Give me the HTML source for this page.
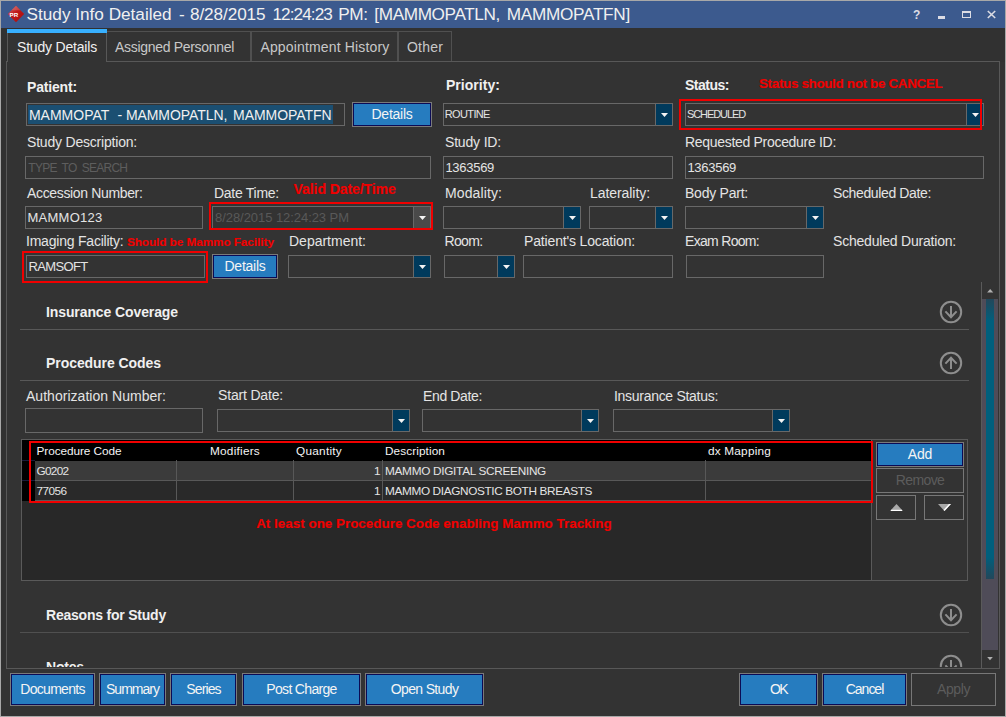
<!DOCTYPE html><html><head><meta charset="utf-8"><title>Study Info Detailed</title><style>
html,body{margin:0;padding:0;}body{width:1006px;height:717px;overflow:hidden;background:#333333;position:relative;font-family:"Liberation Sans", sans-serif;}
.a{position:absolute;box-sizing:border-box;}
.t{position:absolute;white-space:nowrap;line-height:20px;height:20px;}
svg{position:absolute;overflow:visible;}
</style></head><body>
<div class="a" style="left:0px;top:0px;width:1006px;height:717px;background:#a8a8a8;"></div>
<div class="a" style="left:1px;top:1px;width:1004px;height:715px;background:#333333;"></div>
<div class="a" style="left:1px;top:1px;width:1004px;height:27px;background:#3c5a8e;"></div>
<div class="a" style="left:1px;top:28px;width:1004px;height:34px;background:#313131;"></div>
<div class="a" style="left:1px;top:62px;width:6px;height:607px;background:#313131;"></div>
<svg style="left:7px;top:5px" width="18" height="18" viewBox="0 0 18 18"><defs><linearGradient id="g1" x1="0" y1="0" x2="1" y2="1"><stop offset="0" stop-color="#d46a6a"/><stop offset="0.45" stop-color="#c01818"/><stop offset="1" stop-color="#a80c0c"/></linearGradient></defs><polygon points="9,0.8 17.2,9 9,17.2 0.8,9" fill="url(#g1)"/><polygon points="9,0.8 13.5,5.3 4.5,5.3" fill="#e09090" opacity="0.35"/><text x="2.6" y="11.6" font-family="Liberation Sans, sans-serif" font-weight="bold" font-size="6.2" fill="#ffffff">PR</text></svg>
<div class="a" style="left:938px;top:15.5px;width:7px;height:3px;background:#dcdce4;"></div>
<div class="a" style="left:962px;top:11px;width:9.4px;height:7.2px;border:1px solid #dcdce4;border-top-width:2px;"></div>
<svg style="left:987px;top:11px" width="9" height="7" viewBox="0 0 9 7"><path d="M0.8 0 L8.2 7 M8.2 0 L0.8 7" stroke="#dcdce4" stroke-width="1.6" fill="none"/></svg>
<div class="a" style="left:6px;top:61px;width:994px;height:608px;background:#333333;border:1px solid #585858;"></div>
<div class="a" style="left:107px;top:31px;width:144px;height:30px;background:#333333;border:1px solid #505050;border-bottom:none;border-left:none;"></div>
<div class="a" style="left:251px;top:31px;width:147px;height:30px;background:#333333;border:1px solid #505050;border-bottom:none;"></div>
<div class="a" style="left:398px;top:31px;width:54px;height:30px;background:#333333;border:1px solid #505050;border-bottom:none;"></div>
<div class="a" style="left:7px;top:29px;width:100px;height:33px;background:#333333;border:1px solid #585858;border-bottom:none;border-top:none;"></div>
<div class="a" style="left:7px;top:29px;width:100px;height:4px;background:#38b0ff;"></div>
<div class="a" style="left:26px;top:103px;width:319px;height:23px;border:1px solid #686868;"></div>
<div class="a" style="left:28px;top:105px;width:305px;height:19px;background:#1b4f72;"></div>
<div class="a" style="left:352px;top:102px;width:80px;height:25px;background:#267cbf;border:1px solid #7a7a7a;"></div>
<div class="a" style="left:353px;top:103px;width:78px;height:23px;background:#267cbf;border:1px solid #0b0b55;"></div>
<div class="a" style="left:443px;top:103px;width:230px;height:23px;border:1px solid #686868;"></div>
<div class="a" style="left:655px;top:104px;width:17px;height:21px;background:#003a5c;border-left:1px solid #686868;"></div>
<svg style="left:660.5px;top:113px" width="7" height="4" viewBox="0 0 7 4"><polygon points="0,0 7,0 3.5,4" fill="#f4f4f4"/></svg>
<div class="a" style="left:685px;top:103px;width:299px;height:23px;border:1px solid #686868;"></div>
<div class="a" style="left:966px;top:104px;width:17px;height:21px;background:#003a5c;border-left:1px solid #686868;"></div>
<svg style="left:971.5px;top:113px" width="7" height="4" viewBox="0 0 7 4"><polygon points="0,0 7,0 3.5,4" fill="#f4f4f4"/></svg>
<div class="a" style="left:679px;top:99px;width:303px;height:31px;border:2px solid #f00000;"></div>
<div class="a" style="left:25px;top:156px;width:406px;height:23px;border:1px solid #686868;"></div>
<div class="a" style="left:443px;top:156px;width:230px;height:23px;border:1px solid #686868;"></div>
<div class="a" style="left:685px;top:156px;width:299px;height:23px;border:1px solid #686868;"></div>
<div class="a" style="left:25px;top:206px;width:178px;height:23px;border:1px solid #686868;"></div>
<div class="a" style="left:212px;top:206px;width:219px;height:23px;border:1px solid #686868;"></div>
<div class="a" style="left:413px;top:207px;width:17px;height:21px;background:#4a4a4a;border-left:1px solid #686868;"></div>
<svg style="left:418.5px;top:216px" width="7" height="4" viewBox="0 0 7 4"><polygon points="0,0 7,0 3.5,4" fill="#f4f4f4"/></svg>
<div class="a" style="left:209px;top:202px;width:224px;height:28px;border:2px solid #f00000;"></div>
<div class="a" style="left:443px;top:206px;width:138px;height:23px;border:1px solid #686868;"></div>
<div class="a" style="left:563px;top:207px;width:17px;height:21px;background:#003a5c;border-left:1px solid #686868;"></div>
<svg style="left:568.5px;top:216px" width="7" height="4" viewBox="0 0 7 4"><polygon points="0,0 7,0 3.5,4" fill="#f4f4f4"/></svg>
<div class="a" style="left:589px;top:206px;width:84px;height:23px;border:1px solid #686868;"></div>
<div class="a" style="left:655px;top:207px;width:17px;height:21px;background:#003a5c;border-left:1px solid #686868;"></div>
<svg style="left:660.5px;top:216px" width="7" height="4" viewBox="0 0 7 4"><polygon points="0,0 7,0 3.5,4" fill="#f4f4f4"/></svg>
<div class="a" style="left:685px;top:206px;width:139px;height:23px;border:1px solid #686868;"></div>
<div class="a" style="left:806px;top:207px;width:17px;height:21px;background:#003a5c;border-left:1px solid #686868;"></div>
<svg style="left:811.5px;top:216px" width="7" height="4" viewBox="0 0 7 4"><polygon points="0,0 7,0 3.5,4" fill="#f4f4f4"/></svg>
<div class="a" style="left:26px;top:255px;width:179px;height:23px;border:1px solid #686868;"></div>
<div class="a" style="left:22px;top:251px;width:186px;height:32px;border:2px solid #f00000;"></div>
<div class="a" style="left:212px;top:254px;width:66px;height:25px;background:#267cbf;border:1px solid #7a7a7a;"></div>
<div class="a" style="left:213px;top:255px;width:64px;height:23px;background:#267cbf;border:1px solid #0b0b55;"></div>
<div class="a" style="left:288px;top:255px;width:143px;height:23px;border:1px solid #686868;"></div>
<div class="a" style="left:413px;top:256px;width:17px;height:21px;background:#003a5c;border-left:1px solid #686868;"></div>
<svg style="left:418.5px;top:265px" width="7" height="4" viewBox="0 0 7 4"><polygon points="0,0 7,0 3.5,4" fill="#f4f4f4"/></svg>
<div class="a" style="left:444px;top:255px;width:71px;height:23px;border:1px solid #686868;"></div>
<div class="a" style="left:497px;top:256px;width:17px;height:21px;background:#003a5c;border-left:1px solid #686868;"></div>
<svg style="left:502.5px;top:265px" width="7" height="4" viewBox="0 0 7 4"><polygon points="0,0 7,0 3.5,4" fill="#f4f4f4"/></svg>
<div class="a" style="left:523px;top:255px;width:150px;height:23px;border:1px solid #686868;"></div>
<div class="a" style="left:686px;top:255px;width:138px;height:23px;border:1px solid #686868;"></div>
<div class="a" style="left:20px;top:329px;width:949px;height:1px;background:#585858;"></div>
<svg style="left:0;top:0" width="1006" height="717"><g transform="translate(951,312)"><circle cx="0" cy="0" r="10.2" fill="none" stroke="#8e8e8e" stroke-width="2"/><path d="M0 -6 L0 5 M-5.6 -0.6 L0 5.2 L5.6 -0.6" fill="none" stroke="#8e8e8e" stroke-width="2"/></g></svg>
<div class="a" style="left:20px;top:380px;width:949px;height:1px;background:#585858;"></div>
<svg style="left:0;top:0" width="1006" height="717"><g transform="translate(951,363) scale(1,-1)"><circle cx="0" cy="0" r="10.2" fill="none" stroke="#8e8e8e" stroke-width="2"/><path d="M0 -6 L0 5 M-5.6 -0.6 L0 5.2 L5.6 -0.6" fill="none" stroke="#8e8e8e" stroke-width="2"/></g></svg>
<div class="a" style="left:25px;top:408px;width:178px;height:25px;border:1px solid #686868;"></div>
<div class="a" style="left:217px;top:409px;width:193px;height:23px;border:1px solid #686868;"></div>
<div class="a" style="left:392px;top:410px;width:17px;height:21px;background:#003a5c;border-left:1px solid #686868;"></div>
<svg style="left:397.5px;top:419px" width="7" height="4" viewBox="0 0 7 4"><polygon points="0,0 7,0 3.5,4" fill="#f4f4f4"/></svg>
<div class="a" style="left:422px;top:409px;width:177px;height:23px;border:1px solid #686868;"></div>
<div class="a" style="left:581px;top:410px;width:17px;height:21px;background:#003a5c;border-left:1px solid #686868;"></div>
<svg style="left:586.5px;top:419px" width="7" height="4" viewBox="0 0 7 4"><polygon points="0,0 7,0 3.5,4" fill="#f4f4f4"/></svg>
<div class="a" style="left:613px;top:409px;width:177px;height:23px;border:1px solid #686868;"></div>
<div class="a" style="left:772px;top:410px;width:17px;height:21px;background:#003a5c;border-left:1px solid #686868;"></div>
<svg style="left:777.5px;top:419px" width="7" height="4" viewBox="0 0 7 4"><polygon points="0,0 7,0 3.5,4" fill="#f4f4f4"/></svg>
<div class="a" style="left:21px;top:439px;width:947px;height:142px;border:1px solid #5a5a5a;"></div>
<div class="a" style="left:22px;top:440px;width:849px;height:140px;background:#282828;"></div>
<div class="a" style="left:871px;top:440px;width:1px;height:140px;background:#5a5a5a;"></div>
<div class="a" style="left:22px;top:440px;width:849px;height:21px;background:#000000;"></div>
<div class="a" style="left:22px;top:460px;width:13px;height:41px;background:#000000;"></div>
<div class="a" style="left:22px;top:460px;width:13px;height:1px;background:#1a1a3a;"></div>
<div class="a" style="left:22px;top:480px;width:13px;height:1px;background:#1a1a3a;"></div>
<div class="a" style="left:35px;top:461px;width:836px;height:20px;background:#3b3b3b;"></div>
<div class="a" style="left:35px;top:481px;width:836px;height:20px;background:#292929;"></div>
<div class="a" style="left:35px;top:480px;width:836px;height:1px;background:#585858;"></div>
<div class="a" style="left:35px;top:500px;width:836px;height:1px;background:#585858;"></div>
<div class="a" style="left:176px;top:460px;width:1px;height:41px;background:#585858;"></div>
<div class="a" style="left:293px;top:460px;width:1px;height:41px;background:#585858;"></div>
<div class="a" style="left:382px;top:460px;width:1px;height:41px;background:#585858;"></div>
<div class="a" style="left:705px;top:460px;width:1px;height:41px;background:#585858;"></div>
<div class="a" style="left:29px;top:441px;width:844px;height:62px;border:2px solid #f00000;"></div>
<div class="a" style="left:876px;top:442px;width:88px;height:25px;background:#267cbf;border:1px solid #7a7a7a;"></div>
<div class="a" style="left:877px;top:443px;width:86px;height:23px;background:#267cbf;border:1px solid #0b0b55;"></div>
<div class="a" style="left:876px;top:468px;width:88px;height:25px;border:1px solid #777777;"></div>
<div class="a" style="left:876px;top:495px;width:40px;height:25px;border:1px solid #777777;"></div>
<div class="a" style="left:924px;top:495px;width:40px;height:25px;border:1px solid #777777;"></div>
<svg style="left:889.5px;top:504px" width="13" height="7" viewBox="0 0 13 7"><polygon points="0,7 13,7 6.5,0" fill="#a8a8a8"/><rect x="1" y="5.8" width="11" height="1.2" fill="#ffffff"/></svg>
<svg style="left:938px;top:504px" width="13" height="7" viewBox="0 0 13 7"><polygon points="0,0 13,0 6.5,7" fill="#a8a8a8"/><polygon points="13,0 6.5,7 5.5,6 11,0" fill="#ffffff"/></svg>
<div class="a" style="left:20px;top:632px;width:949px;height:1px;background:#505050;"></div>
<svg style="left:0;top:0" width="1006" height="717"><g transform="translate(951,615)"><circle cx="0" cy="0" r="10.2" fill="none" stroke="#8e8e8e" stroke-width="2"/><path d="M0 -6 L0 5 M-5.6 -0.6 L0 5.2 L5.6 -0.6" fill="none" stroke="#8e8e8e" stroke-width="2"/></g></svg>
<div class="a" style="left:20px;top:650px;width:960px;height:17px;overflow:hidden;"><span style="position:absolute;left:26px;top:6.5px;font-size:14px;font-weight:bold;color:#f0f0f0;line-height:20px;letter-spacing:-0.2px">Notes</span><svg style="left:0;top:0" width="960" height="40"><g transform="translate(931,16)"><circle cx="0" cy="0" r="10.2" fill="none" stroke="#8e8e8e" stroke-width="2"/><path d="M0 -6 L0 5 M-5.6 -0.6 L0 5.2 L5.6 -0.6" fill="none" stroke="#8e8e8e" stroke-width="2"/></g></svg></div>
<div class="a" style="left:981px;top:282px;width:1px;height:386px;background:#5a5a5a;"></div>
<div class="a" style="left:982px;top:299px;width:16px;height:351px;background:#4f4c58;"></div>
<div class="a" style="left:986px;top:299px;width:8px;height:280px;background:linear-gradient(#23475a 0px,#005f7d 22px,#005f7d 258px,#23475a 280px);"></div>
<svg style="left:986.8px;top:288.7px" width="6.4" height="3.5" viewBox="0 0 7 4"><polygon points="0,4 7,4 3.5,0" fill="#b0b0b0"/></svg>
<svg style="left:986.8px;top:656.8px" width="6" height="3.2" viewBox="0 0 7 4"><polygon points="0,0 7,0 3.5,4" fill="#b0b0b0"/></svg>
<div class="a" style="left:10px;top:673px;width:85px;height:33px;background:#267cbf;border:1px solid #7a7a7a;"></div>
<div class="a" style="left:11px;top:674px;width:83px;height:31px;background:#267cbf;border:1px solid #0b0b55;"></div>
<div class="a" style="left:99px;top:673px;width:67px;height:33px;background:#267cbf;border:1px solid #7a7a7a;"></div>
<div class="a" style="left:100px;top:674px;width:65px;height:31px;background:#267cbf;border:1px solid #0b0b55;"></div>
<div class="a" style="left:170px;top:673px;width:67px;height:33px;background:#267cbf;border:1px solid #7a7a7a;"></div>
<div class="a" style="left:171px;top:674px;width:65px;height:31px;background:#267cbf;border:1px solid #0b0b55;"></div>
<div class="a" style="left:242px;top:673px;width:119px;height:33px;background:#267cbf;border:1px solid #7a7a7a;"></div>
<div class="a" style="left:243px;top:674px;width:117px;height:31px;background:#267cbf;border:1px solid #0b0b55;"></div>
<div class="a" style="left:365px;top:673px;width:119px;height:33px;background:#267cbf;border:1px solid #7a7a7a;"></div>
<div class="a" style="left:366px;top:674px;width:117px;height:31px;background:#267cbf;border:1px solid #0b0b55;"></div>
<div class="a" style="left:739px;top:673px;width:79px;height:33px;background:#267cbf;border:1px solid #7a7a7a;"></div>
<div class="a" style="left:740px;top:674px;width:77px;height:31px;background:#267cbf;border:1px solid #0b0b55;"></div>
<div class="a" style="left:822px;top:673px;width:85px;height:33px;background:#267cbf;border:1px solid #7a7a7a;"></div>
<div class="a" style="left:823px;top:674px;width:83px;height:31px;background:#267cbf;border:1px solid #0b0b55;"></div>
<div class="a" style="left:911px;top:673px;width:85px;height:33px;border:1px solid #777777;"></div>
<span class="t" id="t0" style="left:26.6px;top:4.04px;font-size:17.2px;color:#f0f0f0;letter-spacing:-0.012px;">Study Info Detailed</span>
<span class="t" id="t1" style="left:179px;top:4.04px;font-size:17.2px;color:#f0f0f0;letter-spacing:-0.234px;">-</span>
<span class="t" id="t2" style="left:190px;top:4.04px;font-size:17.2px;color:#f0f0f0;letter-spacing:-0.108px;">8/28/2015</span>
<span class="t" id="t3" style="left:272.4px;top:4.04px;font-size:17.2px;color:#f0f0f0;letter-spacing:-0.913px;">12:24:23</span>
<span class="t" id="t4" style="left:338.3px;top:4.04px;font-size:17.2px;color:#f0f0f0;letter-spacing:-0.388px;">PM:</span>
<span class="t" id="t5" style="left:374.3px;top:4.04px;font-size:17.2px;color:#f0f0f0;letter-spacing:-0.374px;">[MAMMOPATLN,</span>
<span class="t" id="t6" style="left:506.7px;top:4.04px;font-size:17.2px;color:#f0f0f0;letter-spacing:-0.278px;">MAMMOPATFN]</span>
<span class="t" id="t7" style="left:913px;top:5.14px;font-size:12px;color:#dcdce4;font-weight:bold;">?</span>
<span class="t" id="t8" style="left:17px;top:37.15px;font-size:14px;color:#f0f0f0;letter-spacing:-0.191px;">Study Details</span>
<span class="t" id="t9" style="left:115px;top:37.15px;font-size:14px;color:#c8c8c8;letter-spacing:-0.307px;">Assigned Personnel</span>
<span class="t" id="t10" style="left:260.4px;top:37.15px;font-size:14px;color:#c8c8c8;letter-spacing:0.155px;">Appointment History</span>
<span class="t" id="t11" style="left:407px;top:37.15px;font-size:14px;color:#c8c8c8;letter-spacing:0.197px;">Other</span>
<span class="t" id="t12" style="left:27px;top:77.15px;font-size:14px;color:#f0f0f0;font-weight:bold;letter-spacing:-0.168px;">Patient:</span>
<span class="t" id="t13" style="left:446px;top:75.15px;font-size:14px;color:#f0f0f0;font-weight:bold;letter-spacing:0.035px;">Priority:</span>
<span class="t" id="t14" style="left:685px;top:75.15px;font-size:14px;color:#f0f0f0;font-weight:bold;letter-spacing:-0.493px;">Status:</span>
<span class="t" id="t15" style="left:759px;top:74.39px;font-size:13.3px;color:#f00000;font-weight:bold;letter-spacing:-0.270px;-webkit-text-stroke:0.15px #f00000;">Status should not be CANCEL</span>
<span class="t" id="t16" style="left:28.9px;top:105.15px;font-size:14px;color:#f0f0f0;letter-spacing:0.016px;">MAMMOPAT</span>
<span class="t" id="t17" style="left:117.6px;top:105.15px;font-size:14px;color:#f0f0f0;">-</span>
<span class="t" id="t18" style="left:125.9px;top:105.15px;font-size:14px;color:#f0f0f0;letter-spacing:-0.060px;">MAMMOPATLN,</span>
<span class="t" id="t19" style="left:233px;top:105.15px;font-size:14px;color:#f0f0f0;letter-spacing:-0.033px;">MAMMOPATFN</span>
<span class="t" id="t20" style="left:371.5px;top:104.15px;font-size:14px;color:#f4f4f4;letter-spacing:-0.257px;">Details</span>
<span class="t" id="t21" style="left:444.8px;top:104.19px;font-size:11px;color:#e4e4e4;letter-spacing:-0.643px;">ROUTINE</span>
<span class="t" id="t22" style="left:687px;top:104.19px;font-size:11px;color:#e4e4e4;letter-spacing:-1.095px;">SCHEDULED</span>
<span class="t" id="t23" style="left:27px;top:132.15px;font-size:14px;color:#e4e4e4;letter-spacing:-0.201px;">Study Description:</span>
<span class="t" id="t24" style="left:445px;top:132.15px;font-size:14px;color:#e4e4e4;letter-spacing:-0.177px;">Study ID:</span>
<span class="t" id="t25" style="left:685px;top:132.15px;font-size:14px;color:#e4e4e4;letter-spacing:-0.304px;">Requested Procedure ID:</span>
<span class="t" id="t26" style="left:28.3px;top:157.84px;font-size:12px;color:#5e5e5e;letter-spacing:-0.732px;word-spacing:2.5px;">TYPE TO SEARCH</span>
<span class="t" id="t27" style="left:445.4px;top:157.5px;font-size:13px;color:#e4e4e4;letter-spacing:-0.275px;">1363569</span>
<span class="t" id="t28" style="left:687.4px;top:157.5px;font-size:13px;color:#e4e4e4;letter-spacing:-0.275px;">1363569</span>
<span class="t" id="t29" style="left:27px;top:183.15px;font-size:14px;color:#e4e4e4;letter-spacing:-0.347px;">Accession Number:</span>
<span class="t" id="t30" style="left:214px;top:183.15px;font-size:14px;color:#e4e4e4;letter-spacing:-0.270px;">Date Time:</span>
<span class="t" id="t31" style="left:293.6px;top:179.05px;font-size:14px;color:#f00000;font-weight:bold;letter-spacing:-0.082px;-webkit-text-stroke:0.15px #f00000;">Valid Date/Time</span>
<span class="t" id="t32" style="left:445px;top:183.15px;font-size:14px;color:#e4e4e4;letter-spacing:0.108px;">Modality:</span>
<span class="t" id="t33" style="left:590px;top:183.15px;font-size:14px;color:#e4e4e4;letter-spacing:-0.064px;">Laterality:</span>
<span class="t" id="t34" style="left:685px;top:183.15px;font-size:14px;color:#e4e4e4;letter-spacing:-0.237px;">Body Part:</span>
<span class="t" id="t35" style="left:833px;top:183.15px;font-size:14px;color:#e4e4e4;letter-spacing:-0.369px;">Scheduled Date:</span>
<span class="t" id="t36" style="left:27.5px;top:207.5px;font-size:13px;color:#e4e4e4;letter-spacing:0.254px;">MAMMO123</span>
<span class="t" id="t37" style="left:215px;top:207.5px;font-size:13px;color:#595959;letter-spacing:-0.056px;">8/28/2015 12:24:23 PM</span>
<span class="t" id="t38" style="left:26px;top:231.15px;font-size:14px;color:#e4e4e4;letter-spacing:-0.215px;">Imaging Facility:</span>
<span class="t" id="t39" style="left:126.9px;top:231.75px;font-size:11.7px;color:#f00000;font-weight:bold;letter-spacing:-0.018px;-webkit-text-stroke:0.15px #f00000;">Should be Mammo Facility</span>
<span class="t" id="t40" style="left:289px;top:231.15px;font-size:14px;color:#e4e4e4;letter-spacing:-0.004px;">Department:</span>
<span class="t" id="t41" style="left:444.5px;top:231.15px;font-size:14px;color:#e4e4e4;letter-spacing:-0.647px;">Room:</span>
<span class="t" id="t42" style="left:524px;top:231.15px;font-size:14px;color:#e4e4e4;letter-spacing:-0.156px;">Patient's Location:</span>
<span class="t" id="t43" style="left:685px;top:231.15px;font-size:14px;color:#e4e4e4;letter-spacing:-0.692px;">Exam Room:</span>
<span class="t" id="t44" style="left:833px;top:231.15px;font-size:14px;color:#e4e4e4;letter-spacing:-0.204px;">Scheduled Duration:</span>
<span class="t" id="t45" style="left:28.5px;top:256.5px;font-size:13px;color:#e4e4e4;letter-spacing:-0.652px;">RAMSOFT</span>
<span class="t" id="t46" style="left:224.5px;top:256.15px;font-size:14px;color:#f4f4f4;letter-spacing:-0.257px;">Details</span>
<span class="t" id="t47" style="left:46px;top:302.15px;font-size:14px;color:#f0f0f0;font-weight:bold;letter-spacing:-0.102px;">Insurance Coverage</span>
<span class="t" id="t48" style="left:46px;top:353.15px;font-size:14px;color:#f0f0f0;font-weight:bold;letter-spacing:-0.062px;">Procedure Codes</span>
<span class="t" id="t49" style="left:26px;top:386.15px;font-size:14px;color:#e4e4e4;letter-spacing:0.033px;">Authorization Number:</span>
<span class="t" id="t50" style="left:218px;top:385.15px;font-size:14px;color:#e4e4e4;letter-spacing:-0.175px;">Start Date:</span>
<span class="t" id="t51" style="left:423px;top:386.15px;font-size:14px;color:#e4e4e4;letter-spacing:-0.363px;">End Date:</span>
<span class="t" id="t52" style="left:614px;top:386.15px;font-size:14px;color:#e4e4e4;letter-spacing:-0.291px;">Insurance Status:</span>
<span class="t" id="t53" style="left:36.5px;top:440.91px;font-size:11.8px;color:#f4f4f4;letter-spacing:-0.066px;">Procedure Code</span>
<span class="t" id="t54" style="left:210px;top:440.91px;font-size:11.8px;color:#f4f4f4;letter-spacing:0.238px;">Modifiers</span>
<span class="t" id="t55" style="left:296px;top:440.91px;font-size:11.8px;color:#f4f4f4;letter-spacing:0.258px;">Quantity</span>
<span class="t" id="t56" style="left:385px;top:440.91px;font-size:11.8px;color:#f4f4f4;letter-spacing:0.089px;">Description</span>
<span class="t" id="t57" style="left:708px;top:440.91px;font-size:11.8px;color:#f4f4f4;letter-spacing:0.200px;">dx Mapping</span>
<span class="t" id="t58" style="left:36.5px;top:460.91px;font-size:11.8px;color:#e4e4e4;letter-spacing:-0.684px;">G0202</span>
<span class="t" id="t59" style="left:36.5px;top:480.91px;font-size:11.8px;color:#e4e4e4;letter-spacing:-0.562px;">77056</span>
<span class="t" id="t60" style="left:374px;top:460.91px;font-size:11.8px;color:#e4e4e4;">1</span>
<span class="t" id="t61" style="left:374px;top:480.91px;font-size:11.8px;color:#e4e4e4;">1</span>
<span class="t" id="t62" style="left:385px;top:460.91px;font-size:11.8px;color:#e4e4e4;letter-spacing:-0.296px;">MAMMO DIGITAL SCREENING</span>
<span class="t" id="t63" style="left:385px;top:480.91px;font-size:11.8px;color:#e4e4e4;letter-spacing:-0.366px;">MAMMO DIAGNOSTIC BOTH BREASTS</span>
<span class="t" id="t64" style="left:256.2px;top:513.89px;font-size:13.3px;color:#f00000;font-weight:bold;letter-spacing:0.060px;-webkit-text-stroke:0.15px #f00000;">At least one Procedure Code enabling Mammo Tracking</span>
<span class="t" id="t65" style="left:907.75px;top:444.15px;font-size:14px;color:#f4f4f4;letter-spacing:-0.141px;">Add</span>
<span class="t" id="t66" style="left:895.75px;top:470.15px;font-size:14px;color:#5c5c5c;letter-spacing:-0.607px;">Remove</span>
<span class="t" id="t67" style="left:46px;top:605.15px;font-size:14px;color:#f0f0f0;font-weight:bold;letter-spacing:-0.218px;">Reasons for Study</span>
<span class="t" id="t68" style="left:20.25px;top:679.15px;font-size:14px;color:#f4f4f4;letter-spacing:-0.701px;">Documents</span>
<span class="t" id="t69" style="left:106.0px;top:679.15px;font-size:14px;color:#f4f4f4;letter-spacing:-0.987px;">Summary</span>
<span class="t" id="t70" style="left:186.25px;top:679.15px;font-size:14px;color:#f4f4f4;letter-spacing:-0.865px;">Series</span>
<span class="t" id="t71" style="left:266.25px;top:679.15px;font-size:14px;color:#f4f4f4;letter-spacing:-0.666px;">Post Charge</span>
<span class="t" id="t72" style="left:390.75px;top:679.15px;font-size:14px;color:#f4f4f4;letter-spacing:-0.644px;">Open Study</span>
<span class="t" id="t73" style="left:770.0px;top:679.15px;font-size:14px;color:#f4f4f4;letter-spacing:-1.617px;">OK</span>
<span class="t" id="t74" style="left:845.75px;top:679.15px;font-size:14px;color:#f4f4f4;letter-spacing:-1.016px;">Cancel</span>
<span class="t" id="t75" style="left:937.0px;top:679.15px;font-size:14px;color:#5c5c5c;letter-spacing:-0.406px;">Apply</span>
</body></html>
